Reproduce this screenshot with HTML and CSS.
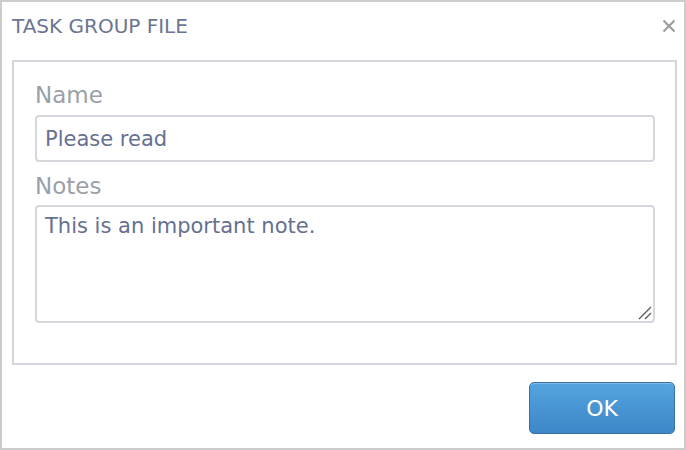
FILE: index.html
```html
<!DOCTYPE html>
<html>
<head>
<meta charset="utf-8">
<link rel="stylesheet" href="styles.css">
</head>
<body>
<div class="dialog">
  <div class="header">
    <span class="title">TASK GROUP FILE</span>
    <span class="close">
      <svg width="14" height="14" viewBox="0 0 14 14"><path d="M1.5 1.5 L12.5 12.5 M12.5 1.5 L1.5 12.5" stroke="#9a9a9a" stroke-width="2" fill="none"/></svg>
    </span>
  </div>
  <div class="panel">
    <label class="label">Name</label>
    <input class="field" type="text" value="Please read">
    <label class="label label-notes">Notes</label>
    <div class="area-wrap">
      <textarea class="field area">This is an important note.</textarea>
      <svg class="grip" width="14" height="14" viewBox="0 0 14 14"><path d="M1 13 L13 1 M7 13 L13 7" stroke="#5a5a5a" stroke-width="1.4" fill="none"/></svg>
    </div>
  </div>
  <div class="footer">
    <button class="ok">OK</button>
  </div>
</div>
</body>
</html>
```
FILE: styles.css
```css
html, body {
  margin: 0;
  padding: 0;
  background: #fff;
}
.dialog {
  width: 686px;
  height: 450px;
  box-sizing: border-box;
  border: 2px solid #cccccc;
  display: flex;
  flex-direction: column;
  font-family: "DejaVu Sans", Verdana, sans-serif;
}
.header {
  height: 48px;
  padding: 0 8px 0 10px;
  display: flex;
  align-items: center;
  justify-content: space-between;
}
.title {
  font-size: 20px;
  color: #6b7592;
}
.close {
  display: flex;
  width: 14px;
  height: 14px;
}
.panel {
  margin: 10px 7px 0 10px;
  border: 2px solid #d3d7dc;
  padding: 20px 20px 40px 21px;
  display: flex;
  flex-direction: column;
}
.label {
  font-size: 23px;
  line-height: 27px;
  color: #9aa0a8;
}
.label-notes {
  margin-top: 11px;
}
.field {
  margin-top: 6px;
  box-sizing: border-box;
  height: 47px;
  border: 2px solid #d4d7dc;
  border-radius: 4px;
  padding: 0 8px;
  font-family: "DejaVu Sans", Verdana, sans-serif;
  font-size: 21px;
  color: #66708f;
  outline: none;
}
.area-wrap {
  position: relative;
  display: flex;
  flex-direction: column;
  margin-top: 5px;
}
.area {
  margin-top: 0;
  height: 118px;
  padding: 6px 8px;
  line-height: 26px;
  resize: none;
}
.grip {
  position: absolute;
  right: 3px;
  bottom: 3px;
}
.footer {
  display: flex;
  justify-content: flex-end;
  padding: 17px 9px 0 0;
}
.ok {
  width: 146px;
  height: 52px;
  border: 1px solid #3470a6;
  border-radius: 5px;
  background: linear-gradient(#55a4df, #3d86c8);
  color: #fff;
  font-family: "DejaVu Sans", Verdana, sans-serif;
  font-size: 22px;
  box-shadow: inset 0 1px 0 rgba(255,255,255,0.25);
}
```
